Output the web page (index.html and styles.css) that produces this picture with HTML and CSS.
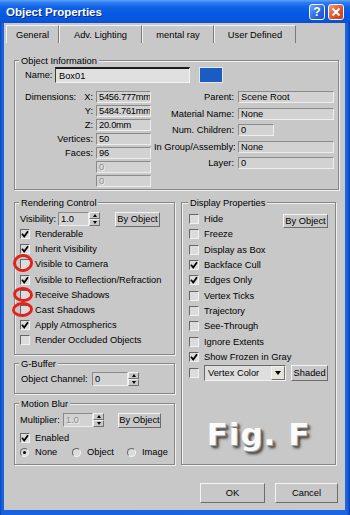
FILE: index.html
```html
<!DOCTYPE html>
<html>
<head>
<meta charset="utf-8">
<title>Object Properties</title>
<link rel="stylesheet" href="styles.css">
</head>
<body>
<div class="window">
  <div class="titlebar">
    <span class="title">Object Properties</span>
    <span class="tbtn help">?</span>
    <span class="tbtn close"><svg width="10" height="10" viewBox="0 0 10 10"><path d="M1.5 1.5 L8.5 8.5 M8.5 1.5 L1.5 8.5" stroke="#fff" stroke-width="2" fill="none"/></svg></span>
  </div>
  <div class="client">
    <div class="tabs">
      <span class="tab t1 sel">General</span>
      <span class="tab t2">Adv. Lighting</span>
      <span class="tab t3">mental ray</span>
      <span class="tab t4">User Defined</span>
    </div>
    <div class="panel">
      <div class="group info">
        <div class="gtitle">Object Information</div>
        <div class="name-row">
          <span class="nlbl">Name:</span>
          <span class="name-input">Box01</span>
          <span class="swatch"></span>
        </div>
        <div class="info-body">
          <div class="info-left">
            <div class="lrow"><span class="lbl split"><span>Dimensions:</span><span>X:</span></span><span class="field">5456.777mm</span></div>
            <div class="lrow"><span class="lbl">Y:</span><span class="field">5484.761mm</span></div>
            <div class="lrow"><span class="lbl">Z:</span><span class="field">20.0mm</span></div>
            <div class="lrow"><span class="lbl">Vertices:</span><span class="field">50</span></div>
            <div class="lrow"><span class="lbl">Faces:</span><span class="field">96</span></div>
            <div class="lrow"><span class="lbl"></span><span class="field disabled">0</span></div>
            <div class="lrow"><span class="lbl"></span><span class="field disabled">0</span></div>
          </div>
          <div class="info-right">
            <div class="rrow"><span class="lbl">Parent:</span><span class="field">Scene Root</span></div>
            <div class="rrow"><span class="lbl">Material Name:</span><span class="field">None</span></div>
            <div class="rrow"><span class="lbl">Num. Children:</span><span class="field short">0</span></div>
            <div class="rrow"><span class="lbl">In Group/Assembly:</span><span class="field">None</span></div>
            <div class="rrow"><span class="lbl">Layer:</span><span class="field">0</span></div>
          </div>
        </div>
      </div>

      <div class="cols">
        <div class="col-left">
          <div class="group rc">
            <div class="gtitle">Rendering Control</div>
            <div class="vis-row">
              <span class="vlbl">Visibility:</span>
              <span class="spin"><span class="field sfield w31">1.0</span><span class="arrows"><span class="up"></span><span class="dn"></span></span></span>
              <span class="btn bobj">By Object</span>
            </div>
            <div class="cb-row"><span class="cb"><svg class="ck" viewBox="0 0 8 8"><path d="M1 3.8 L3.2 6.5 L7 1.2" fill="none" stroke="#000" stroke-width="1.8"/></svg></span>Renderable</div>
            <div class="cb-row"><span class="cb"><svg class="ck" viewBox="0 0 8 8"><path d="M1 3.8 L3.2 6.5 L7 1.2" fill="none" stroke="#000" stroke-width="1.8"/></svg></span>Inherit Visibility</div>
            <div class="cb-row"><span class="cb"><span class="ring r1"></span></span>Visible to Camera</div>
            <div class="cb-row"><span class="cb"><svg class="ck" viewBox="0 0 8 8"><path d="M1 3.8 L3.2 6.5 L7 1.2" fill="none" stroke="#000" stroke-width="1.8"/></svg></span>Visible to Reflection/Refraction</div>
            <div class="cb-row"><span class="cb"><span class="ring r2"></span></span>Receive Shadows</div>
            <div class="cb-row"><span class="cb"><span class="ring r3"></span></span>Cast Shadows</div>
            <div class="cb-row"><span class="cb"><svg class="ck" viewBox="0 0 8 8"><path d="M1 3.8 L3.2 6.5 L7 1.2" fill="none" stroke="#000" stroke-width="1.8"/></svg></span>Apply Atmospherics</div>
            <div class="cb-row"><span class="cb"></span>Render Occluded Objects</div>
          </div>

          <div class="group gb">
            <div class="gtitle">G-Buffer</div>
            <div class="gb-row">
              <span class="glbl">Object Channel:</span>
              <span class="spin"><span class="field sfield w36">0</span><span class="arrows"><span class="up"></span><span class="dn"></span></span></span>
            </div>
          </div>

          <div class="group mb">
            <div class="gtitle">Motion Blur</div>
            <div class="mb-row">
              <span class="mlbl">Multiplier:</span>
              <span class="spin"><span class="field sfield w30 disabled">1.0</span><span class="arrows"><span class="up"></span><span class="dn"></span></span></span>
              <span class="btn bobj2">By Object</span>
            </div>
            <div class="en-row"><span class="cb"><svg class="ck" viewBox="0 0 8 8"><path d="M1 3.8 L3.2 6.5 L7 1.2" fill="none" stroke="#000" stroke-width="1.8"/></svg></span>Enabled</div>
            <div class="radio-row">
              <span class="ritem w52"><span class="radio on"></span>None</span>
              <span class="ritem w55"><span class="radio"></span>Object</span>
              <span class="ritem"><span class="radio"></span>Image</span>
            </div>
          </div>
        </div>

        <div class="group display">
          <div class="gtitle">Display Properties</div>
          <div class="drows">
            <div class="cb-row"><span class="cb"></span>Hide<span class="btn bobj3">By Object</span></div>
            <div class="cb-row"><span class="cb"></span>Freeze</div>
            <div class="cb-row"><span class="cb"></span>Display as Box</div>
            <div class="cb-row"><span class="cb"><svg class="ck" viewBox="0 0 8 8"><path d="M1 3.8 L3.2 6.5 L7 1.2" fill="none" stroke="#000" stroke-width="1.8"/></svg></span>Backface Cull</div>
            <div class="cb-row"><span class="cb"><svg class="ck" viewBox="0 0 8 8"><path d="M1 3.8 L3.2 6.5 L7 1.2" fill="none" stroke="#000" stroke-width="1.8"/></svg></span>Edges Only</div>
            <div class="cb-row"><span class="cb"></span>Vertex Ticks</div>
            <div class="cb-row"><span class="cb"></span>Trajectory</div>
            <div class="cb-row"><span class="cb"></span>See-Through</div>
            <div class="cb-row"><span class="cb"></span>Ignore Extents</div>
            <div class="cb-row"><span class="cb"><svg class="ck" viewBox="0 0 8 8"><path d="M1 3.8 L3.2 6.5 L7 1.2" fill="none" stroke="#000" stroke-width="1.8"/></svg></span>Show Frozen in Gray</div>
            <div class="last-row">
              <span class="cb"></span>
              <span class="combo"><span class="ctext">Vertex Color</span><span class="cbtn"><span class="tri"></span></span></span>
              <span class="btn shaded">Shaded</span>
            </div>
          </div>
          <div class="fig">Fig. F</div>
        </div>
      </div>
    </div>
    <div class="actions">
      <span class="btn ok">OK</span>
      <span class="btn cancel">Cancel</span>
    </div>
  </div>
</div>
</body>
</html>
```

FILE: styles.css
```css
* { box-sizing: border-box; }
html, body { margin: 0; padding: 0; }
body {
  width: 350px;
  height: 515px;
  overflow: hidden;
  font-family: "Liberation Sans", Arial, sans-serif;
  font-size: 9.3px;
  color: #000;
  background: #1a5ed8;
}
.window {
  width: 350px;
  height: 515px;
  display: flex;
  flex-direction: column;
  background: linear-gradient(90deg, #0a44b8 0, #1862e0 2px, #1c66e4 347px, #0a3ca8 350px);
}
.titlebar {
  height: 23px;
  flex: none;
  display: flex;
  align-items: center;
  padding: 0 6px 0 6px;
  background: linear-gradient(#5aa2fa 0, #2a78f0 3px, #0d60e6 8px, #0558e2 15px, #0a58de 19px, #0b4fcc 23px);
}
.title {
  flex: 1;
  color: #fff;
  font-weight: bold;
  font-size: 11.5px;
  text-shadow: 1px 1px 0 #0a2c84;
}
.tbtn {
  width: 16px;
  height: 16px;
  border: 1px solid #f4f4f4;
  border-radius: 3px;
  display: flex;
  align-items: center;
  justify-content: center;
  color: #fff;
  font-weight: bold;
  font-size: 12px;
}
.help { background: linear-gradient(135deg, #6aa8ff, #2a66e0 60%, #1c50c8); margin-right: 3px; }
.close { background: linear-gradient(135deg, #f49a70, #e0532a 55%, #c83c18); }

.client {
  flex: 1;
  margin: 0 5px 5px 4px;
  background: #c8c8c8;
  display: flex;
  flex-direction: column;
}
.tabs { display: flex; margin: 2px 0 0 2px; height: 18px; }
.tab {
  height: 18px;
  display: flex;
  align-items: center;
  justify-content: center;
  border-top: 1px solid #f2f2f2;
  border-left: 1px solid #f2f2f2;
  border-right: 1px solid #7a7a7a;
  background: #c8c8c8;
}
.t1 { width: 53px; }
.t2 { width: 83px; }
.t3 { width: 72px; }
.t4 { width: 82px; }

.panel { padding: 17px 0 0 10px; display: flex; flex-direction: column; }

.group {
  border: 1px solid #868686;
  box-shadow: inset 1px 1px 0 #f0f0f0, 1px 1px 0 #f0f0f0;
  display: flex;
  flex-direction: column;
}
.gtitle {
  height: 12px;
  line-height: 12px;
  margin: -6px 0 0 -1px;
  padding: 0 2px;
  background: #c8c8c8;
  align-self: flex-start;
}

.field {
  height: 12px;
  background: #d2d2d2;
  border-top: 1px solid #8a8a8a;
  border-left: 1px solid #8a8a8a;
  border-right: 1px solid #eeeeee;
  border-bottom: 1px solid #eeeeee;
  padding-left: 2px;
  display: flex;
  align-items: center;
  white-space: nowrap;
  overflow: hidden;
}
.disabled { color: #8e8e8e; text-shadow: 1px 1px 0 #eeeeee; }

/* Object information */
.info { width: 325px; padding: 0 4px 1px 5px; }
.name-row { display: flex; align-items: center; height: 16px; padding-left: 5px; }
.nlbl { width: 30px; }
.name-input {
  width: 135px;
  height: 16px;
  background: #e0e0e0;
  border-top: 2px solid #1c1c1c;
  border-left: 1px solid #3c3c3c;
  border-right: 1px solid #f4f4f4;
  border-bottom: 1px solid #f4f4f4;
  padding-left: 3px;
  display: flex;
  align-items: center;
}
.swatch {
  width: 24px;
  height: 16px;
  margin-left: 9px;
  background: #1a5cc4;
  border: 1px solid #e8e8e8;
}
.info-body { display: flex; align-items: flex-start; margin-top: 7px; }
.info-left { padding-left: 5px; }
.lrow { display: flex; align-items: center; height: 14px; }
.lrow .lbl { width: 68px; display: flex; justify-content: flex-end; }
.lrow .lbl.split { justify-content: space-between; }
.lrow .field { width: 55px; margin-left: 3px; letter-spacing: -0.25px; }
.info-right { margin-left: auto; margin-top: -1px; }
.rrow { display: flex; align-items: center; height: 16.5px; }
.rrow .lbl { width: 80px; text-align: right; white-space: nowrap; }
.rrow .field { width: 96px; margin-left: 4px; }
.rrow .field.short { width: 36px; }

/* columns */
.cols { display: flex; margin-top: 12px; gap: 6px; }
.col-left { width: 161px; display: flex; flex-direction: column; }

.rc { padding: 0 5px 6px 5px; }
.vis-row { height: 14.5px; margin-top: 3px; display: flex; align-items: center; }
.vlbl { width: 38px; }
.spin { display: flex; height: 14px; }
.sfield { height: 14px; }
.w30 { width: 30px; }
.w31 { width: 31px; }
.w36 { width: 36px; }
.arrows { width: 11px; height: 14px; display: flex; flex-direction: column; }
.arrows span {
  flex: 1;
  display: flex;
  align-items: center;
  justify-content: center;
  background: #c8c8c8;
  border: 1px solid;
  border-color: #f2f2f2 #707070 #707070 #f2f2f2;
}
.arrows .up::before {
  content: "";
  border-left: 2.5px solid transparent;
  border-right: 2.5px solid transparent;
  border-bottom: 3px solid #000;
}
.arrows .dn::before {
  content: "";
  border-left: 2.5px solid transparent;
  border-right: 2.5px solid transparent;
  border-top: 3px solid #000;
}
.btn {
  height: 15px;
  border: 1px solid;
  border-color: #f4f4f4 #6c6c6c #6c6c6c #f4f4f4;
  background: #c8c8c8;
  display: flex;
  align-items: center;
  justify-content: center;
  white-space: nowrap;
}
.bobj { width: 45px; margin-left: 15px; }

.cb-row { height: 15.2px; display: flex; align-items: center; white-space: nowrap; }
.cb {
  width: 10px;
  height: 10px;
  flex: none;
  border: 1px solid;
  border-color: #666 #f2f2f2 #f2f2f2 #666;
  background: #dcdcdc;
  margin-right: 5px;
  position: relative;
  display: flex;
  align-items: center;
  justify-content: center;
}
.ck { width: 8px; height: 8px; }
.ring {
  position: absolute;
  border: 3px solid #e2231d;
  border-radius: 50%;
}
.r1 { left: -8px; top: -6px; width: 20px; height: 18px; transform: rotate(-6deg); }
.r2 { left: -8px; top: -4px; width: 20px; height: 15px; transform: rotate(4deg); }
.r3 { left: -9px; top: -4px; width: 21px; height: 15px; transform: rotate(-4deg); }

.gb { margin-top: 8px; padding: 0 5px 7px 5px; }
.gb-row { height: 14px; margin-top: 2px; display: flex; align-items: center; }
.glbl { width: 72px; padding-left: 1px; }

.mb { margin-top: 9px; padding: 0 5px 5px 5px; flex: 1; }
.mb-row { height: 14px; margin-top: 3px; display: flex; align-items: center; }
.mlbl { width: 43px; }
.bobj2 { width: 43px; height: 15px; margin-left: 14px; }
.en-row { height: 14px; margin-top: 4px; display: flex; align-items: center; }
.radio-row { height: 14px; display: flex; align-items: center; }
.ritem { display: flex; align-items: center; }
.w52 { width: 52px; }
.w55 { width: 55px; }
.radio {
  width: 9px;
  height: 9px;
  border-radius: 50%;
  border: 1px solid;
  border-color: #666 #f2f2f2 #f2f2f2 #666;
  background: #dcdcdc;
  margin-right: 6px;
  display: flex;
  align-items: center;
  justify-content: center;
}
.radio.on::before {
  content: "";
  width: 3px;
  height: 3px;
  border-radius: 50%;
  background: #000;
}

/* display properties */
.display { width: 155px; padding: 0 7px 0 7px; }
.drows { margin-top: 2.5px; }
.display .cb-row { height: 15.3px; }
.bobj3 { width: 45px; height: 14px; margin-left: auto; margin-top: 3px; }
.last-row { height: 17px; display: flex; align-items: center; }
.combo {
  width: 83px;
  height: 16px;
  display: flex;
  align-items: stretch;
  background: #dedede;
  border: 1px solid;
  border-color: #6a6a6a #f2f2f2 #f2f2f2 #6a6a6a;
}
.ctext { flex: 1; padding-left: 3px; display: flex; align-items: center; }
.cbtn {
  width: 14px;
  display: flex;
  align-items: center;
  justify-content: center;
  background: #e4e4dc;
  border: 1px solid;
  border-color: #f4f4f4 #707070 #707070 #f4f4f4;
}
.tri {
  border-left: 3px solid transparent;
  border-right: 3px solid transparent;
  border-top: 4px solid #000;
}
.shaded { width: 37px; height: 16px; margin-left: 5px; }
.fig {
  margin-top: 35px;
  text-align: center;
  font-family: "DejaVu Sans", sans-serif;
  font-weight: bold;
  font-size: 31px;
  line-height: 36px;
  letter-spacing: 1px;
  color: #fbfbfb;
  text-shadow: 1px 1px 0 #a0a0a0, 2px 2px 1px #606060, 3px 3px 3px #303030;
}

.actions {
  display: flex;
  justify-content: flex-end;
  gap: 10px;
  margin-top: 18px;
  padding-right: 7px;
}
.ok { width: 65px; height: 20px; }
.cancel { width: 63px; height: 20px; }
```
